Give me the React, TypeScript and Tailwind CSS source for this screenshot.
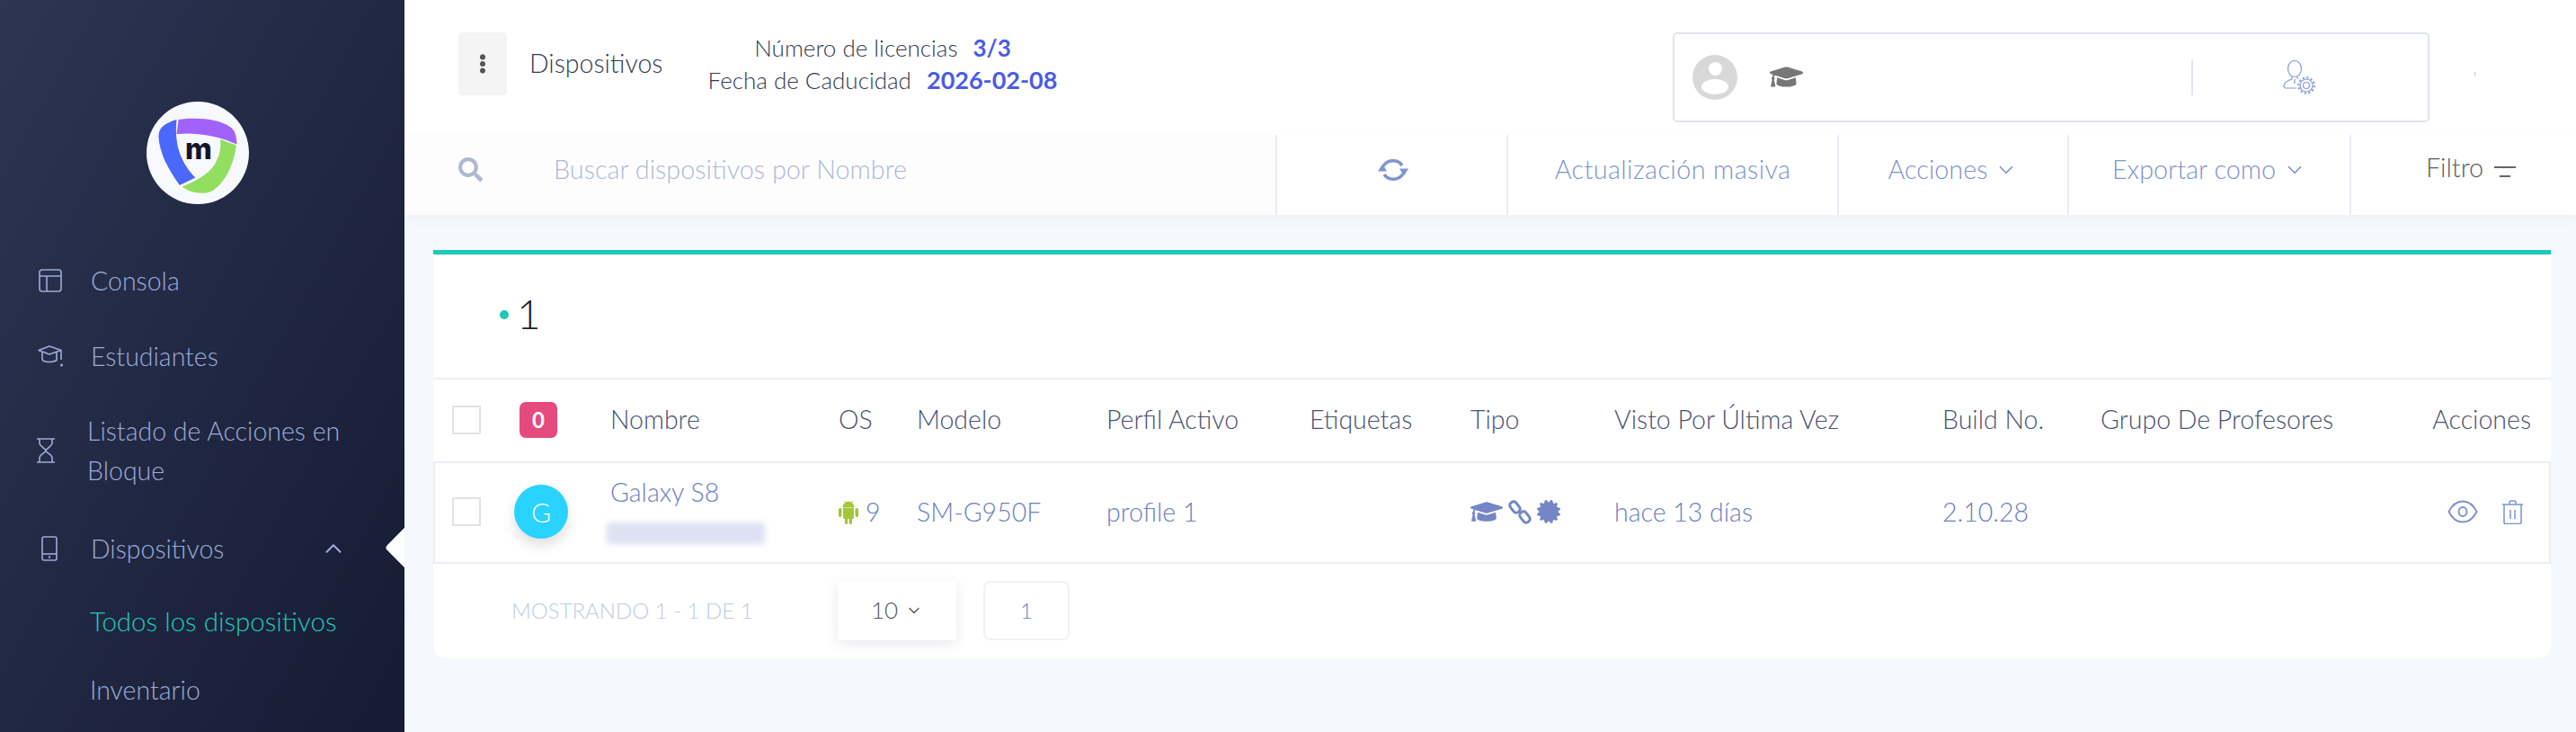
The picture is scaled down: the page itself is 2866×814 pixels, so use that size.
import { FaCertificate, FaEllipsisV, FaGraduationCap, FaSearch } from "react-icons/fa";
import { ChevronDown, ChevronUp } from "lucide-react";

const FONT = "font-['Lato','Noto_Sans',sans-serif]";
const COLUMNS = "grid grid-cols-[69px_107px_254px_87px_211px_226px_179px_160px_365px_176px_1fr_auto] items-center";

function Logo() {
	return (
		<div className="flex h-[114px] w-[114px] items-center justify-center rounded-full bg-[#f8f9fe]">
			<svg viewBox="0 0 340 340" className="h-[114px] w-[114px]">
				<path d="M106 60C170 50 250 58 285 90Q298 102 300 142C250 118 170 100 100 108Z" fill="#a162fb" />
				<path d="M100 60C65 70 40 85 40 115C42 170 75 230 110 277L162 252C120 210 90 150 100 60Z" fill="#4a68fb" />
				<path d="M245 125L298 145C290 210 260 270 220 295C190 310 150 305 118 282C160 265 200 245 225 210C240 185 248 160 245 125Z" fill="#92df5f" />
				<text x="128" y="192" fontSize="96" fontWeight="800" fill="#15152a" fontFamily="Inter, sans-serif">
					m
				</text>
			</svg>
		</div>
	);
}

function LayoutIcon() {
	return (
		<svg viewBox="0 0 26 26" fill="none" stroke="currentColor" strokeWidth="1.6" className="h-[26px] w-[26px]">
			<rect x="1" y="1" width="24" height="24" rx="3" />
			<path d="M1 8h24M9 8v17" />
		</svg>
	);
}

function StudentIcon() {
	return (
		<svg viewBox="0 0 30 26" fill="none" stroke="currentColor" strokeWidth="1.6" className="h-[26px] w-[30px]">
			<path d="M1 6.500 13 2l13 4.500-13 4.500z" strokeLinejoin="round" />
			<path d="M5 8.500V16c0 2.500 4 3.500 8 3.500 3 0 6-.5 8-2V8.500" />
			<path d="M26 7v10" />
			<circle cx="26.500" cy="23" r="1.500" fill="currentColor" stroke="none" />
		</svg>
	);
}

function HourglassIcon() {
	return (
		<svg viewBox="0 0 20 28" fill="none" stroke="currentColor" strokeWidth="1.6" className="h-[28px] w-[20px]">
			<path d="M0 1h20M0 27h20M3 1v5c0 3 7 6 7 8s-7 5-7 8v5M17 1v5c0 3-7 6-7 8s7 5 7 8v5" />
		</svg>
	);
}

function PhoneIcon() {
	return (
		<svg viewBox="0 0 18 28" fill="none" stroke="currentColor" strokeWidth="1.600" className="h-[28px] w-[18px]">
			<rect x="1" y="1" width="16" height="26" rx="2" />
			<path d="M1 20h16" />
			<circle cx="9" cy="23.500" r="1.200" fill="currentColor" stroke="none" />
		</svg>
	);
}

function RefreshIcon() {
	return (
		<svg viewBox="0 0 34 26" className="ml-[2px] h-[26px] w-[34px]" fill="none" stroke="#7f94d4" strokeWidth="3.500">
			<path d="M6 9A12 11 0 0 1 27 8" />
			<path d="M28 17A12 11 0 0 1 7 18" />
			<path d="M24 11.500h10l-5 8zM0 14.500h10l-5-8z" fill="#7f94d4" stroke="none" />
		</svg>
	);
}

function AndroidIcon() {
	return (
		<svg viewBox="0 0 22 27" fill="#a4c639" className="h-[27px] w-[22px]">
			<path d="M5 8a6 6 0 0 1 12 0zM7 2.500 6 1M15 2.500 16 1" stroke="#a4c639" strokeWidth="1" />
			<path d="M5 9h12v10.500a1.500 1.500 0 0 1-1.500 1.500h-9A1.500 1.500 0 0 1 5 19.500z" />
			<rect x="0" y="9" width="3.500" height="10" rx="1.700" />
			<rect x="18.500" y="9" width="3.500" height="10" rx="1.700" />
			<rect x="7" y="19" width="3.200" height="8" rx="1.500" />
			<rect x="11.800" y="19" width="3.200" height="8" rx="1.500" />
		</svg>
	);
}

function ChainIcon() {
	return (
		<svg viewBox="0 0 26 27" fill="none" stroke="#7486c6" strokeWidth="3" className="h-[27px] w-[26px]">
			<rect x="3.500" y="1.500" width="8" height="13" rx="3.500" transform="rotate(-38 7.500 8)" />
			<rect x="14.500" y="12.500" width="8" height="13" rx="3.500" transform="rotate(-38 18.500 19)" />
		</svg>
	);
}

function UserGearIcon() {
	return (
		<svg viewBox="0 0 36 38" fill="none" stroke="#8b9dd6" strokeWidth="1.200" className="h-[38px] w-[36px]">
			<ellipse cx="13" cy="9.500" rx="7.500" ry="9" />
			<path d="M10 18v3c-5 1.500-8 3.500-9 7-.3 2 1 3 3 3h11M16 18v3" />
			<path d="M13 21v5" />
			<circle cx="26" cy="28" r="8.800" strokeWidth="2" strokeDasharray="2.200 2.400" />
			<circle cx="26" cy="28" r="7" fill="#fff" />
			<circle cx="26" cy="28" r="3.500" />
		</svg>
	);
}

function EyeIcon() {
	return (
		<svg viewBox="0 0 34 26" fill="none" stroke="#7f93d2" strokeWidth="2" className="h-[26px] w-[34px]">
			<path d="M1.500 13C5 6 10 1.500 17 1.500S29 6 32.500 13C29 20 24 24.500 17 24.500S5 20 1.500 13Z" />
			<ellipse cx="17" cy="13" rx="4.500" ry="5" />
		</svg>
	);
}

function TrashIcon() {
	return (
		<svg viewBox="0 0 25 27" fill="none" stroke="#7f93d2" strokeWidth="1.500" className="h-[27px] w-[25px]">
			<path d="M1 5h23M9 5V2.500C9 1.500 10 1 11 1h3c1 0 2 .5 2 1.500V5" />
			<path d="M3 5v20c0 1 .7 1.500 1.500 1.500h16c.8 0 1.500-.5 1.500-1.500V5" />
			<path d="M10 11v10M15 11v10" />
		</svg>
	);
}

function NavItem({ icon, label, iconClass }: { icon: React.ReactNode; label: string; iconClass: string }) {
	return (
		<div className="flex h-[84px] items-center pl-[40px] text-[#9dacd8]">
			<span className={iconClass}>{icon}</span>
			<span>{label}</span>
		</div>
	);
}

function Sidebar() {
	return (
		<aside className="relative flex h-[814px] w-[450px] shrink-0 flex-col overflow-hidden bg-linear-to-br from-[#2c3553] to-[#161b33] text-[28.5px] font-light">
			<div className="flex justify-center pt-[113px] pb-[43px] pr-[10px]">
				<Logo />
			</div>
			<NavItem icon={<LayoutIcon />} label="Consola" iconClass="flex w-[61px] shrink-0 pl-[3px]" />
			<NavItem icon={<StudentIcon />} label="Estudiantes" iconClass="flex w-[61px] shrink-0 pl-[2px]" />
			<div className="flex items-center pb-[21px] pl-[41px] pt-[19px] text-[#9dacd8]">
				<span className="flex w-[56px] shrink-0">
					<HourglassIcon />
				</span>
				<span className="leading-[44px]">
					Listado de Acciones en
					<br />
					Bloque
				</span>
			</div>
			<div className="flex h-[84px] items-center pl-[46px] pr-[64px] pt-[4px] text-[#9dacd8]">
				<span className="flex w-[55px] shrink-0">
					<PhoneIcon />
				</span>
				<span className="flex-1">Dispositivos</span>
				<ChevronUp size={30} strokeWidth={1.6} />
			</div>
			<div className="flex h-[82px] items-center pl-[100px] text-[29.500px] text-[#1fcab8]">Todos los dispositivos</div>
			<div className="flex h-[70px] items-center pl-[100px] text-[#9dacd8]">Inventario</div>
			<div className="absolute top-[592px] left-[435px] h-[34px] w-[34px] rotate-45 rounded-[4px] bg-white" />
		</aside>
	);
}

function Header() {
	return (
		<header className="flex h-[150px] items-center bg-white pb-[9px] pl-[60px] text-[26px] font-light text-[#343a50]">
			<button className="flex h-[70px] w-[54px] items-center justify-center rounded-[4px] bg-[#f4f4f4] text-[#555]">
				<FaEllipsisV size={22} />
			</button>
			<span className="ml-[25px] w-[198px] text-[28.500px]">Dispositivos</span>
			<div className="w-[390px] text-center leading-[36px]">
				<div>
					Número de licencias <span className="ml-[10px] font-bold text-[#4a5ce6]">3/3</span>
				</div>
				<div>
					Fecha de Caducidad <span className="ml-[10px] text-[27px] font-bold text-[#4a5ce6]">2026-02-08</span>
				</div>
			</div>
			<div className="ml-[684px] mt-[30px] flex h-[100px] w-[842px] items-center rounded-[5px] border-2 border-[#e0e4f0] pl-[20px]">
				<div className="relative h-[50px] w-[50px] overflow-hidden rounded-full bg-[#d8d8d8]">
					<span className="absolute top-[8px] left-[18px] h-[15px] w-[15px] rounded-full bg-white" />
					<span className="absolute top-[27px] left-[10px] h-[17px] w-[30px] rounded-[50%] bg-white" />
				</div>
				<FaGraduationCap size={37} className="ml-[36px] text-[#777]" />
				<div className="ml-[432px] h-[40px] w-[2px] bg-[#e0e5ef]" />
				<span className="ml-[100px]">
					<UserGearIcon />
				</span>
			</div>
			<span className="ml-[50px] mt-[24px] h-[5px] w-[1px] bg-[#ccc]" />
		</header>
	);
}

function ToolCell({ width, children }: { width: string; children: React.ReactNode }) {
	return <div className={`flex ${width} items-center justify-center gap-[8px] border-l-2 border-[#e9ecf4] pb-[12px]`}>{children}</div>;
}

function Toolbar() {
	return (
		<div className="flex h-[89px] bg-white text-[28.800px] font-light text-[#8094d0] shadow-[0_4px_12px_rgba(100,120,160,0.06)]">
			<div className="flex w-[969px] items-center bg-[#fdfdfe] pb-[12px] pl-[60px]">
				<FaSearch size={27} className="text-[#b0b8d0]" />
				<span className="ml-[79px] text-[#b0b9d6]">Buscar dispositivos por Nombre</span>
			</div>
			<ToolCell width="w-[257px]">
				<RefreshIcon />
			</ToolCell>
			<ToolCell width="w-[368px]">
				<span className="tracking-[0.4px]">Actualización masiva</span>
			</ToolCell>
			<ToolCell width="w-[256px]">
				Acciones <ChevronDown size={26} strokeWidth={1.6} />
			</ToolCell>
			<ToolCell width="w-[314px]">
				Exportar como <ChevronDown size={26} strokeWidth={1.6} />
			</ToolCell>
			<ToolCell width="w-[252px]">
				<span className="ml-[16px] flex items-center gap-[12px] pb-[4px] text-[#5c5c5c]">
					Filtro
					<svg viewBox="0 0 24 14" stroke="#666" strokeWidth="2" className="mt-[8px] h-[14px] w-[24px]">
						<path d="M0 2h24M6 12h12" />
					</svg>
				</span>
			</ToolCell>
		</div>
	);
}

function Checkbox() {
	return <span className="block h-[32px] w-[32px] border-2 border-[#e2e2e2] bg-white" />;
}

function DeviceTable() {
	return (
		<div className="text-[28.500px] font-light">
			<div className={`${COLUMNS} h-[95px] border-y-2 border-[#ebeff4] pb-[2px] pl-[21px] pr-[22px] text-[#4a5170]`}>
				<Checkbox />
				<span className="ml-[6px] flex h-[40px] w-[42px] items-center justify-center rounded-[7px] bg-[#e54a7e] text-[24px] font-bold text-white">
					0
				</span>
				<span>Nombre</span>
				<span>OS</span>
				<span>Modelo</span>
				<span>Perfil Activo</span>
				<span>Etiquetas</span>
				<span>Tipo</span>
				<span>Visto Por Última Vez</span>
				<span>Build No.</span>
				<span>Grupo De Profesores</span>
				<span>Acciones</span>
			</div>
			<div className={`${COLUMNS} h-[112px] border-x-2 border-b-2 border-[#ebeff4] pb-[2px] pl-[19px] pr-[20px] text-[#6c80c4]`}>
				<Checkbox />
				<span className="flex h-[60px] w-[60px] items-center justify-center rounded-full bg-[#29d3ff] text-[30px] text-white shadow-[0_8px_14px_rgba(0,0,0,0.12)]">
					G
				</span>
				<div className="flex flex-col items-start pb-[4px]">
					<span className="leading-[34px]">Galaxy S8</span>
					<span className="-ml-[4px] mt-[17px] h-[24px] w-[176px] rounded-[3px] bg-[#dde1f2] blur-[3px]" />
				</div>
				<span className="flex items-center gap-[8px]">
					<AndroidIcon />9
				</span>
				<span>SM-G950F</span>
				<span>profile 1</span>
				<span />
				<span className="flex items-center gap-[6px] text-[#7486c6]">
					<FaGraduationCap size={36} />
					<ChainIcon />
					<FaCertificate size={26} />
				</span>
				<span>hace 13 días</span>
				<span>2.10.28</span>
				<span />
				<span className="flex items-center gap-[26px] justify-self-end pr-[8px]">
					<EyeIcon />
					<TrashIcon />
				</span>
			</div>
		</div>
	);
}

function Pagination() {
	return (
		<div className="flex h-[105px] items-center pb-[2px] pl-[87px] text-[24px] font-light">
			<span className="w-[363px] text-[#c0c9e6]">MOSTRANDO 1 - 1 DE 1</span>
			<div className="flex h-[66px] w-[132px] items-center justify-center gap-[8px] rounded-[4px] bg-white text-[26px] text-[#555] shadow-[0_4px_14px_rgba(90,100,130,0.14)]">
				10 <ChevronDown size={20} strokeWidth={1.6} />
			</div>
			<div className="ml-[30px] flex h-[66px] w-[96px] items-center justify-center rounded-[8px] border-2 border-[#eff2f6] text-[#6c80c4]">1</div>
		</div>
	);
}

export default function App() {
	return (
		<div className={`flex h-[814px] w-[2866px] overflow-hidden bg-[#f5f8fc] ${FONT}`}>
			<Sidebar />
			<main className="min-w-0 flex-1">
				<Header />
				<Toolbar />
				<div className="mt-[39px] ml-[32px] mr-[28px] h-[454px] rounded-b-[14px] border-t-[5px] border-[#1ec7b7] bg-white">
					<div className="flex h-[137px] items-center pb-[6px] pl-[74px] text-[46px] font-light text-[#1f1f1f]">
						<span className="mr-[9px] mt-[2px] h-[10px] w-[10px] rounded-full bg-[#1ec7b7]" />1
					</div>
					<DeviceTable />
					<Pagination />
				</div>
			</main>
		</div>
	);
}
